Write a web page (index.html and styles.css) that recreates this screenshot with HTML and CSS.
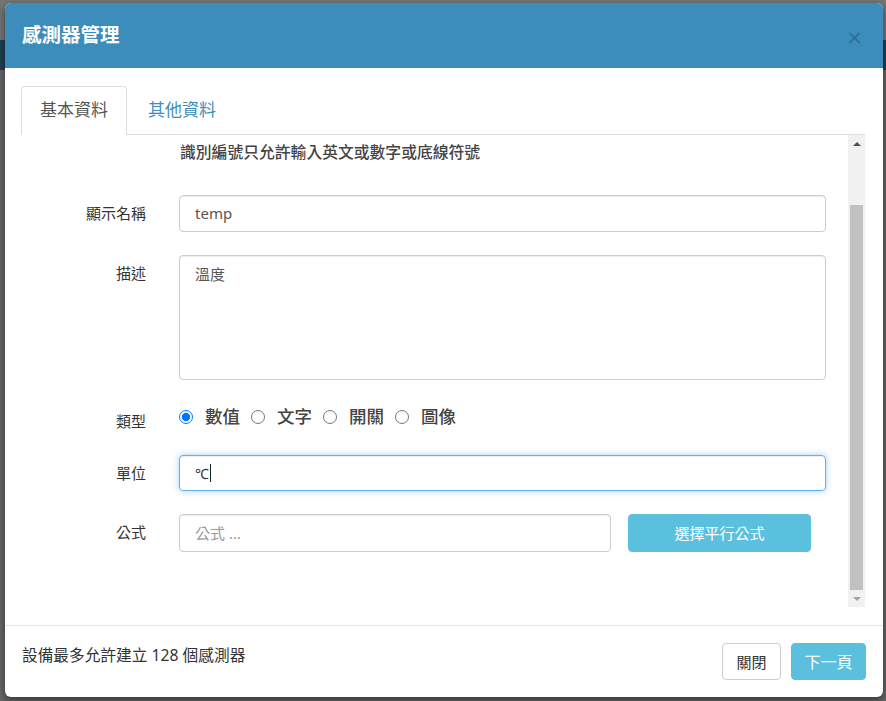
FILE: index.html
```html
<!DOCTYPE html>
<html lang="zh-Hant">
<head>
<meta charset="utf-8">
<title>感測器管理</title>
<link rel="stylesheet" href="styles.css">
</head>
<body>
<div class="modal">
  <div class="modal-header">
    <h4 class="modal-title">感測器管理</h4>
    <span class="close">×</span>
  </div>
  <div class="modal-body">
    <ul class="tabs">
      <li class="tab active">基本資料</li>
      <li class="tab">其他資料</li>
    </ul>
    <div class="scroll-area">
      <div class="scroll-content">
        <p class="help">識別編號只允許輸入英文或數字或底線符號</p>
        <div class="row row-name">
          <label class="label">顯示名稱</label>
          <div class="field"><div class="input">temp</div></div>
        </div>
        <div class="row row-desc">
          <label class="label">描述</label>
          <div class="field"><div class="textarea">溫度</div></div>
        </div>
        <div class="row row-type">
          <label class="label label-type">類型</label>
          <div class="field radios">
            <label class="radio"><input type="radio" name="t" checked><span>數值</span></label>
            <label class="radio"><input type="radio" name="t"><span>文字</span></label>
            <label class="radio"><input type="radio" name="t"><span>開關</span></label>
            <label class="radio"><input type="radio" name="t"><span>圖像</span></label>
          </div>
        </div>
        <div class="row row-unit">
          <label class="label">單位</label>
          <div class="field"><div class="input input-focus">℃<span class="caret"></span></div></div>
        </div>
        <div class="row row-formula">
          <label class="label">公式</label>
          <div class="field formula">
            <div class="input input-formula placeholder">公式 ...</div>
            <button class="btn btn-info btn-formula">選擇平行公式</button>
          </div>
        </div>
      </div>
      <div class="scrollbar">
        <div class="arrow arrow-up"></div>
        <div class="track"><div class="thumb"></div></div>
        <div class="arrow arrow-down"></div>
      </div>
    </div>
  </div>
  <div class="modal-footer">
    <p class="footer-note">設備最多允許建立 128 個感測器</p>
    <div class="footer-buttons">
      <button class="btn btn-default">關閉</button>
      <button class="btn btn-info btn-next">下一頁</button>
    </div>
  </div>
</div>
</body>
</html>
```

FILE: styles.css
```css
* { box-sizing: border-box; }

html, body {
  margin: 0;
  padding: 0;
}

body {
  width: 886px;
  height: 701px;
  overflow: hidden;
  font-family: "Noto Sans", "Noto Sans CJK TC", sans-serif;
  color: #333;
  background: linear-gradient(to bottom, #767676 0, #767676 40px, #213f54 40px, #213f54 70px, #676767 70px, #676767 100%);
  padding: 3px 3px 0 5px;
}

.modal {
  width: 878px;
  height: 694px;
  background: #fff;
  border-radius: 6px;
  overflow: hidden;
  display: flex;
  flex-direction: column;
  box-shadow: 0 3px 9px rgba(0, 0, 0, 0.5);
}

/* header */
.modal-header {
  height: 65px;
  flex: none;
  background: #3c8dbc;
  display: flex;
  align-items: center;
  justify-content: space-between;
  padding: 0 20px 0 17px;
}

.modal-title {
  margin: 0;
  color: #fff;
  font-size: 19.5px;
  font-weight: 700;
  line-height: 24px;
  padding-bottom: 2px;
}

.close {
  font-family: "DejaVu Sans", sans-serif;
  font-size: 20px;
  font-weight: 400;
  line-height: 1;
  color: #000;
  opacity: 0.22;
  margin-top: 3px;
}

/* body */
.modal-body {
  flex: none;
  padding: 18px 18px 18px 16px;
}

.tabs {
  list-style: none;
  margin: 0;
  padding: 0;
  display: flex;
  height: 49px;
  border-bottom: 1px solid #ddd;
}

.tab {
  height: 48px;
  padding: 0 18px;
  margin-right: 2px;
  font-size: 17px;
  line-height: 46px;
  color: #3c8dbc;
  border: 1px solid transparent;
  border-radius: 4px 4px 0 0;
}

.tab.active {
  color: #555;
  height: 49px;
  background: #fff;
  border-color: #ddd;
  border-bottom-color: #fff;
}

.scroll-area {
  height: 472px;
  display: flex;
}

.scroll-content {
  flex: 1;
  overflow: hidden;
  padding-right: 22px;
}

.help {
  margin: 6px 0 0 159px;
  font-size: 15.8px;
  line-height: 22px;
  font-weight: 500;
  color: #444;
}

.row {
  display: flex;
  align-items: flex-start;
}

.label {
  width: 125px;
  flex: none;
  text-align: right;
  margin-right: 33px;
  font-size: 15px;
  line-height: 37px;
  color: #333;
}

.field {
  flex: 1;
}

.row-name { margin-top: 32px; }
.row-desc { margin-top: 23px; }
.row-type { margin-top: 24px; }
.row-unit { margin-top: 17px; }
.row-formula { margin-top: 22px; }

.input {
  height: 37px;
  border: 1px solid #ccc;
  border-radius: 4px;
  padding: 0 15px;
  font-size: 15px;
  line-height: 35px;
  color: #555;
  box-shadow: inset 0 1px 1px rgba(0, 0, 0, 0.075);
  display: flex;
  align-items: center;
}

.textarea {
  height: 125px;
  border: 1px solid #ccc;
  border-radius: 4px;
  padding: 7px 15px;
  font-size: 15px;
  line-height: 23px;
  color: #555;
  box-shadow: inset 0 1px 1px rgba(0, 0, 0, 0.075);
}

.label-type {
  line-height: 34px;
}

.radios {
  display: flex;
  align-items: center;
  height: 25px;
}

.radio {
  display: flex;
  align-items: center;
  margin-right: 11px;
  font-size: 17.5px;
  font-weight: 500;
  line-height: 25px;
  color: #444;
}

.radio input {
  width: 14px;
  height: 14px;
  margin: 0 12px 0 0;
  accent-color: #0075ff;
}

.row-unit .input {
  height: 36px;
}

.input-focus {
  border-color: #66afe9;
  box-shadow: inset 0 1px 1px rgba(0, 0, 0, 0.075), 0 0 7px rgba(102, 175, 233, 0.6);
  color: #333;
  font-size: 14px;
}

.caret {
  display: inline-block;
  width: 1px;
  height: 18px;
  background: #222;
  margin-left: 1px;
}

.formula {
  display: flex;
  gap: 17px;
}

.input-formula {
  width: 432px;
  height: 38px;
}

.placeholder {
  color: #999;
}

.btn {
  font-family: "Noto Sans", "Noto Sans CJK TC", sans-serif;
  height: 37px;
  border-radius: 4px;
  border: 1px solid transparent;
  font-size: 15px;
  line-height: 20px;
  padding: 0;
  white-space: nowrap;
  cursor: pointer;
}

.btn-info {
  background: #5bc0de;
  border-color: #5bc0de;
  color: #fff;
}

.btn-formula {
  width: 183px;
  height: 38px;
}

.btn-default {
  background: #fff;
  border-color: #ccc;
  color: #333;
  width: 59px;
}

.btn-next {
  width: 75px;
  font-size: 16px;
}

/* fake scrollbar */
.scrollbar {
  width: 17px;
  flex: none;
  background: #f1f1f1;
  display: flex;
  flex-direction: column;
  align-items: center;
}

.arrow {
  height: 17px;
  flex: none;
  display: flex;
  align-items: center;
  justify-content: center;
  width: 100%;
}

.arrow-up::before {
  content: "";
  border-left: 4px solid transparent;
  border-right: 4px solid transparent;
  border-bottom: 4px solid #505050;
}

.arrow-down::before {
  content: "";
  border-left: 4px solid transparent;
  border-right: 4px solid transparent;
  border-top: 4px solid #a3a3a3;
}

.track {
  flex: 1;
  width: 100%;
  display: flex;
  flex-direction: column;
  justify-content: flex-end;
  padding: 0 2px;
}

.thumb {
  height: 385px;
  background: #c1c1c1;
}

/* footer */
.modal-footer {
  flex: 1;
  border-top: 1px solid #e5e5e5;
  display: flex;
  justify-content: space-between;
  align-items: flex-start;
  padding: 17px 17px 0 17px;
}

.footer-note {
  margin: 1px 0 0 0;
  font-size: 15.7px;
  line-height: 22px;
  color: #333;
}

.footer-buttons {
  display: flex;
  gap: 10px;
}
```
